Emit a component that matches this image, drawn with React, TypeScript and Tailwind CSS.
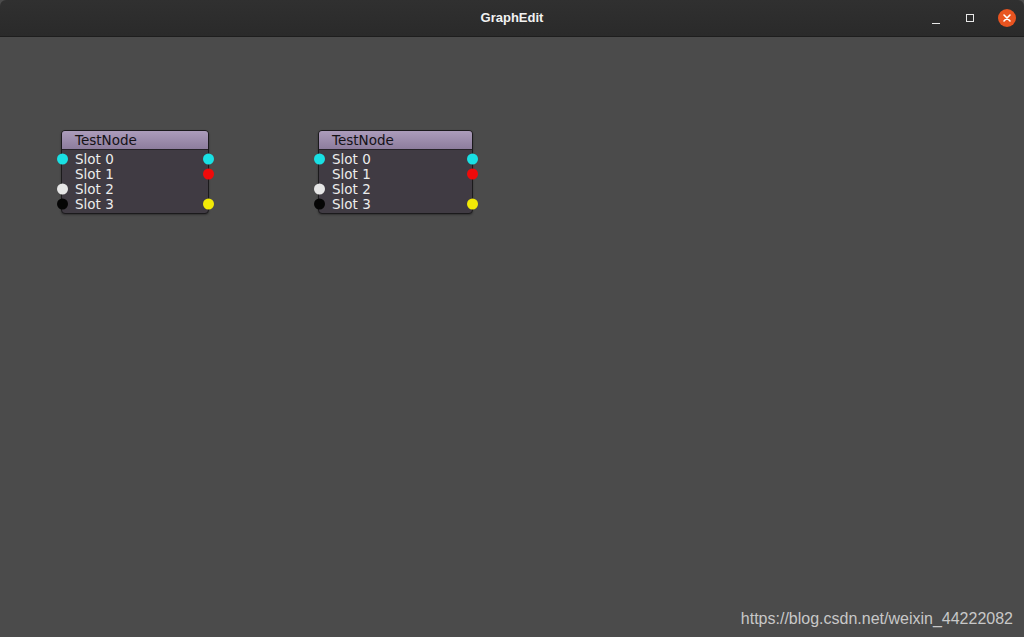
import React from 'react'

type Port = string | null

interface Slot {
  label: string
  left: Port
  right: Port
}

const slots: Slot[] = [
  { label: 'Slot 0', left: '#19e0e4', right: '#19e0e4' },
  { label: 'Slot 1', left: null, right: '#f00a0a' },
  { label: 'Slot 2', left: '#e6e6e6', right: null },
  { label: 'Slot 3', left: '#050505', right: '#f2ea06' },
]

function Dot({ color, side }: { color: string; side: 'left' | 'right' }) {
  return (
    <span
      className={`absolute top-1/2 -translate-y-1/2 w-[11px] h-[11px] rounded-full ${side === 'left' ? 'left-[-5px]' : 'right-[-6px]'}`}
      style={{ backgroundColor: color }}
    />
  )
}

function GraphNode({ className }: { className: string }) {
  return (
    <div
      className={`absolute rounded-[4px] border border-[#1b1a1c] bg-[#403b43] shadow-[0_1px_2px_rgba(0,0,0,0.35)] ${className}`}
      style={{ fontFamily: '"DejaVu Sans", sans-serif' }}
    >
      <div className="h-[19px] rounded-t-[3px] border-b border-[#252227] bg-gradient-to-b from-[#ac9cbb] to-[#8d7d9d] pl-[13px] text-[13.5px] leading-[19px] text-[#141216]">
        TestNode
      </div>
      <div className="pt-[1px] pb-[2px]">
        {slots.map((s) => (
          <div key={s.label} className="relative h-[15px] pl-[13px] text-[13.5px] leading-[15px] text-[#ececec]">
            {s.left && <Dot color={s.left} side="left" />}
            <span className="relative top-[1px]">{s.label}</span>
            {s.right && <Dot color={s.right} side="right" />}
          </div>
        ))}
      </div>
    </div>
  )
}

export default function App() {
  return (
    <div className="w-[1024px] h-[637px] flex flex-col bg-[#4b4b4b] overflow-hidden">
      <div className="h-[37px] shrink-0 flex items-center relative bg-gradient-to-b from-[#303030] to-[#2a2a2a] border-b border-[#1e1e1e] rounded-t-[6px]">
        <div
          className="flex-1 text-center text-[13px] font-bold text-[#f2f2f2]"
          style={{ fontFamily: '"Liberation Sans", sans-serif' }}
        >
          GraphEdit
        </div>
        <div className="absolute right-[8px] top-0 h-[36px] flex items-center gap-[22px]">
          <span className="w-[12px] h-[12px] flex items-end justify-center">
            <span className="block w-[8px] h-[1px] bg-[#e8e8e8]" />
          </span>
          <span className="w-[12px] h-[12px] flex items-center justify-center">
            <span className="block w-[8px] h-[8px] border border-[#e8e8e8]" />
          </span>
          <span className="w-[18px] h-[18px] rounded-full bg-[#e95420] flex items-center justify-center">
            <svg width="10" height="10" viewBox="0 0 10 10">
              <path d="M2 2 L8 8 M8 2 L2 8" stroke="#fff" strokeWidth="1.6" strokeLinecap="round" />
            </svg>
          </span>
        </div>
      </div>
      <div className="relative flex-1">
        <GraphNode className="left-[61px] top-[93px] w-[148px]" />
        <GraphNode className="left-[318px] top-[93px] w-[155px]" />
        <div
          className="absolute right-[11px] bottom-[6px] text-[16px] text-[#c8c8c8]"
          style={{ fontFamily: '"Liberation Sans", sans-serif' }}
        >
          https://blog.csdn.net/weixin_44222082
        </div>
      </div>
    </div>
  )
}
